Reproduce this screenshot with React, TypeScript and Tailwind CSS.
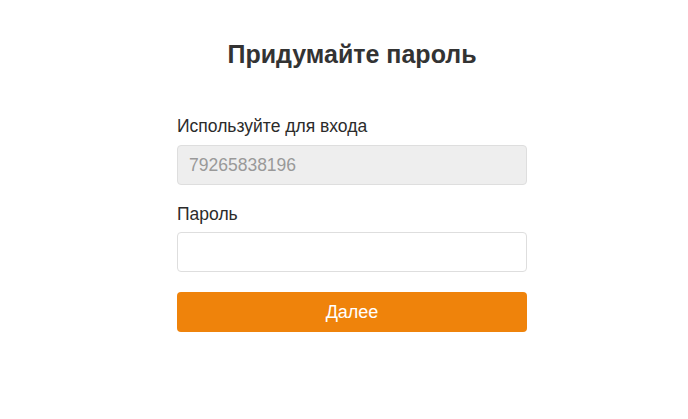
import React from 'react';

const App: React.FC = () => {
  return (
    <div className="min-h-[419px] w-full bg-white flex justify-center pl-4 font-['Liberation_Sans',Arial,sans-serif]">
      <div className="w-[350px] pt-[38px]">
        <h1 className="text-center text-[25px] leading-[32px] font-bold text-[#333]">
          Придумайте пароль
        </h1>

        <form className="mt-[45px]" onSubmit={e => e.preventDefault()}>
          <label className="block text-[17.5px] leading-[22px] text-[#2b2b2b]">
            Используйте для входа
          </label>
          <div className="mt-[8px] h-[40px] rounded-[4px] border border-[#dedede] bg-[#eeeeee] px-[11px] flex items-center text-[17.5px] text-[#999]">
            79265838196
          </div>

          <label className="block mt-[18px] text-[17.5px] leading-[22px] text-[#2b2b2b]">
            Пароль
          </label>
          <input
            type="password"
            className="mt-[7px] block w-full h-[40px] rounded-[4px] border border-[#dedede] bg-white px-[11px] text-[17px] outline-none"
          />

          <button
            type="submit"
            className="mt-[20px] w-full h-[40px] rounded-[4px] bg-[#ef830b] text-white text-[18px]"
          >
            Далее
          </button>
        </form>
      </div>
    </div>
  );
};

export default App;
